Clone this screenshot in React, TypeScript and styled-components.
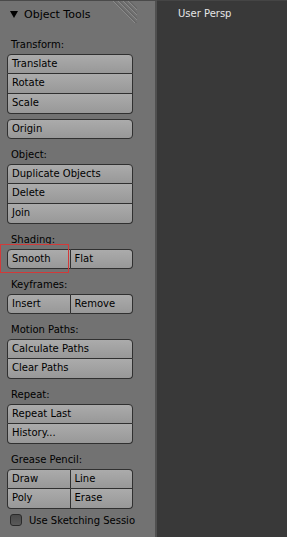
import React from "react";
import styled, { createGlobalStyle } from "styled-components";

const Global = createGlobalStyle`
  html, body { margin: 0; padding: 0; background: #393939; }
  body { font-family: "DejaVu Sans", "Liberation Sans", sans-serif; }
`;

const Screen = styled.div`
  display: flex;
  width: 287px;
  height: 537px;
  overflow: hidden;
`;

const ToolPanel = styled.div`
  position: relative;
  width: 157px;
  flex: none;
  background: #727272;
  border-top: 1px solid #4a4a4a;
  border-right: 2px solid #505050;
  box-sizing: border-box;
  display: flex;
  flex-direction: column;
`;

const Header = styled.div`
  position: relative;
  height: 27px;
  display: flex;
  align-items: center;
  padding-left: 10px;
  gap: 6px;
  font-size: 11px;
  color: #000;
  box-sizing: border-box;
  padding-bottom: 1px;
`;

const Triangle = styled.span`
  width: 0;
  height: 0;
  border-left: 4px solid transparent;
  border-right: 4px solid transparent;
  border-top: 7px solid #000;
  margin-top: 1px;
`;

const Grip = styled.svg`
  position: absolute;
  top: 0;
  left: 113px;
`;

const Content = styled.div`
  padding: 8px 0 0 7px;
  width: 126px;
  display: flex;
  flex-direction: column;
`;

const Label = styled.div`
  height: 18px;
  line-height: 18px;
  padding-left: 4px;
  font-size: 10px;
  color: #000;
`;

const Column = styled.div<{ $gapAfter?: number }>`
  display: flex;
  flex-direction: column;
  margin-bottom: ${(p) => p.$gapAfter ?? 7}px;
`;

const Row = styled.div`
  display: flex;
`;

const Button = styled.div<{ $tl?: boolean; $tr?: boolean; $bl?: boolean; $br?: boolean; $first?: boolean; $left?: boolean }>`
  flex: 1;
  height: 20px;
  box-sizing: border-box;
  border: 1px solid #303030;
  ${(p) => (p.$first ? "" : "border-top: none;")}
  ${(p) => (p.$left ? "" : "border-left: none;")}
  border-top-left-radius: ${(p) => (p.$tl ? 4 : 0)}px;
  border-top-right-radius: ${(p) => (p.$tr ? 4 : 0)}px;
  border-bottom-left-radius: ${(p) => (p.$bl ? 4 : 0)}px;
  border-bottom-right-radius: ${(p) => (p.$br ? 4 : 0)}px;
  background: linear-gradient(#ababab, #989898);
  font-size: 10px;
  line-height: 18px;
  padding-left: 4px;
  color: #000;
  white-space: nowrap;
  overflow: hidden;
`;

const Highlight = styled.div`
  position: absolute;
  left: 0;
  top: 243px;
  width: 69px;
  height: 29px;
  box-sizing: border-box;
  border: 1px solid #d23a3a;
`;

const CheckRow = styled.div`
  display: flex;
  align-items: center;
  gap: 7px;
  height: 20px;
  padding-left: 3px;
  white-space: nowrap;
  font-size: 10px;
  color: #000;
`;

const Check = styled.span`
  width: 12px;
  height: 12px;
  flex: none;
  box-sizing: border-box;
  border: 1px solid #2a2a2a;
  border-radius: 3px;
  background: linear-gradient(#4a4a4a, #5a5a5a);
`;

const Viewport = styled.div`
  flex: 1;
  background: #393939;
  border-top: 1px solid #454545;
  padding: 7px 0 0 21px;
  font-size: 10px;
  color: #e6e6e6;
`;

const ButtonColumn: React.FC<{ items: string[]; gapAfter?: number }> = ({ items, gapAfter }) => (
  <Column $gapAfter={gapAfter}>
    {items.map((t, i) => (
      <Row key={t}>
        <Button
          $first={i === 0}
          $left
          $tl={i === 0}
          $tr={i === 0}
          $bl={i === items.length - 1}
          $br={i === items.length - 1}
        >
          {t}
        </Button>
      </Row>
    ))}
  </Column>
);

const ButtonGrid: React.FC<{ rows: [string, string][]; gapAfter?: number }> = ({ rows, gapAfter }) => (
  <Column $gapAfter={gapAfter}>
    {rows.map((r, i) => (
      <Row key={r[0]}>
        {r.map((t, j) => (
          <Button
            key={t}
            $first={i === 0}
            $left={j === 0}
            $tl={i === 0 && j === 0}
            $tr={i === 0 && j === 1}
            $bl={i === rows.length - 1 && j === 0}
            $br={i === rows.length - 1 && j === 1}
          >
            {t}
          </Button>
        ))}
      </Row>
    ))}
  </Column>
);

export default function App() {
  return (
    <>
      <Global />
      <Screen>
        <ToolPanel>
          <Header>
            <Triangle />
            <span>Object Tools</span>
            <Grip width="24" height="22" viewBox="0 0 24 22">
              {[0, 5, 10, 15].map((x) => (
                <g key={x}>
                  <line x1={x} y1={0} x2={x + 22} y2={22} stroke="#8a8a8a" strokeWidth="1" />
                  <line x1={x + 1.5} y1={0} x2={x + 23.5} y2={22} stroke="#5e5e5e" strokeWidth="1" />
                </g>
              ))}
            </Grip>
          </Header>
          <Content>
            <Label>Transform:</Label>
            <ButtonColumn items={["Translate", "Rotate", "Scale"]} gapAfter={5} />
            <ButtonColumn items={["Origin"]} />
            <Label>Object:</Label>
            <ButtonColumn items={["Duplicate Objects", "Delete", "Join"]} />
            <Label>Shading:</Label>
            <ButtonGrid rows={[["Smooth", "Flat"]]} />
            <Label>Keyframes:</Label>
            <ButtonGrid rows={[["Insert", "Remove"]]} />
            <Label>Motion Paths:</Label>
            <ButtonColumn items={["Calculate Paths", "Clear Paths"]} />
            <Label>Repeat:</Label>
            <ButtonColumn items={["Repeat Last", "History..."]} />
            <Label>Grease Pencil:</Label>
            <ButtonGrid rows={[["Draw", "Line"], ["Poly", "Erase"]]} gapAfter={1} />
            <CheckRow>
              <Check />
              <span>Use Sketching Sessio</span>
            </CheckRow>
          </Content>
          <Highlight />
        </ToolPanel>
        <Viewport>User Persp</Viewport>
      </Screen>
    </>
  );
}
